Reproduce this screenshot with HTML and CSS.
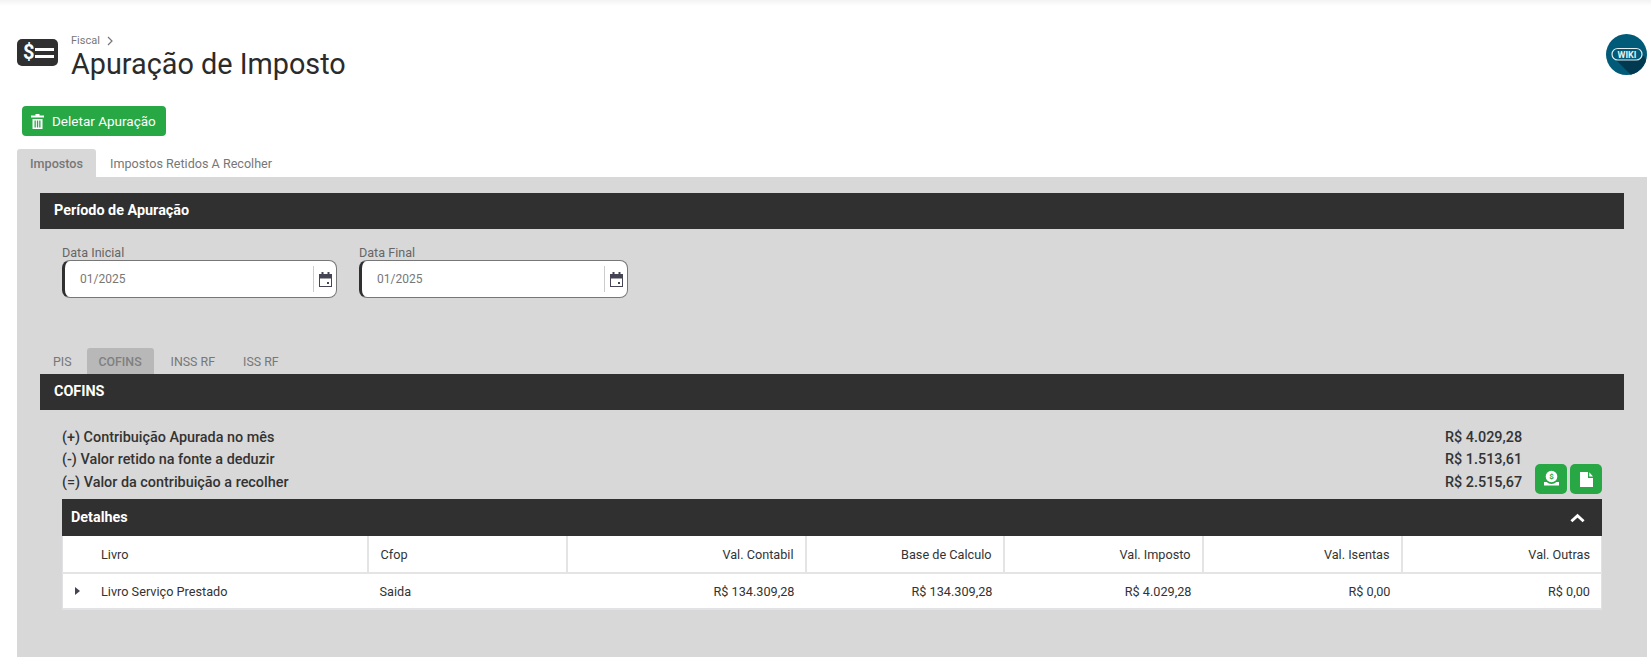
FILE: index.html
```html
<!DOCTYPE html>
<html lang="pt-BR">
<head>
<meta charset="utf-8">
<title>Apuração de Imposto</title>
<link rel="stylesheet" href="styles.css">
</head>
<body>
<div class="topshadow"></div>
<header class="page-head">
  <div class="logo"><span class="logo-s">$</span><span class="logo-lines"><i></i><i></i></span></div>
  <div class="titles">
    <div class="crumb"><span>Fiscal</span>
      <svg class="crumb-arrow" viewBox="0 0 8 10" width="8" height="10"><path d="M2 1l4 4-4 4" fill="none" stroke="#777" stroke-width="1.2"/></svg>
    </div>
    <h1>Apuração de Imposto</h1>
  </div>
  <div class="wiki">
    <svg viewBox="0 0 41 41" width="41" height="41">
      <defs><clipPath id="wc"><circle cx="20.5" cy="20.5" r="20.5"/></clipPath></defs>
      <circle cx="20.5" cy="20.5" r="20.5" fill="#005a78"/>
      <path d="M10 26 L38 22 L41 28 L41 41 L25 41Z" fill="#013a50" clip-path="url(#wc)"/>
      <rect x="6" y="14.500" width="30" height="11.500" rx="5.700" fill="#005a78" stroke="#e4edf0" stroke-width="1.200"/>
      <text x="21" y="23.500" text-anchor="middle" class="wiki-text">WIKI</text>
    </svg>
  </div>
</header>
<div class="actions">
  <button class="btn-del">
    <svg viewBox="0 0 13 15" width="13" height="15"><path fill="#fff" fill-rule="evenodd" d="M4.500 0h4v1.500H13V3.500H0V1.500H4.500zM1.500 5h10v10h-10zM3.500 6.500v7h1.300v-7zM5.900 6.500v7h1.300v-7zM8.200 6.500v7h1.300v-7z"/></svg>
    <span>Deletar Apuração</span>
  </button>
</div>
<nav class="tabs main-tabs">
  <a class="tab active">Impostos</a>
  <a class="tab">Impostos Retidos A Recolher</a>
</nav>
<main class="panel">
  <section class="bar">Período de Apuração</section>
  <div class="dates">
    <div class="field f1">
      <label>Data Inicial</label>
      <div class="input"><span class="val">01/2025</span><span class="cal">
        <svg viewBox="0 0 13 15" width="13" height="15"><path fill="#445" fill-rule="evenodd" d="M2.500 0h2v2h4V0h2v2H13v13H0V2h2.500zM1 6.500V14h11V6.500zM8 10h2v2H8z"/></svg></span></div>
    </div>
    <div class="field f2">
      <label>Data Final</label>
      <div class="input"><span class="val">01/2025</span><span class="cal">
        <svg viewBox="0 0 13 15" width="13" height="15"><path fill="#445" fill-rule="evenodd" d="M2.500 0h2v2h4V0h2v2H13v13H0V2h2.500zM1 6.500V14h11V6.500zM8 10h2v2H8z"/></svg></span></div>
    </div>
  </div>
  <nav class="tabs sub-tabs">
    <a class="stab pis">PIS</a>
    <a class="stab active">COFINS</a>
    <a class="stab">INSS RF</a>
    <a class="stab">ISS RF</a>
  </nav>
  <section class="bar">COFINS</section>
  <div class="inner">
    <div class="summary">
      <div class="lines">
        <div class="line"><span>(+) Contribuição Apurada no mês</span><span class="amt">R$ 4.029,28</span></div>
        <div class="line"><span>(-) Valor retido na fonte a deduzir</span><span class="amt">R$ 1.513,61</span></div>
        <div class="line"><span>(=) Valor da contribuição a recolher</span><span class="amt">R$ 2.515,67</span></div>
      </div>
      <div class="icon-btns">
        <button class="btn-ico"><svg viewBox="0 0 20 20" width="20" height="20"><circle cx="10.500" cy="7.500" r="5.800" fill="#fff"/><path fill="#fff" d="M3 13h2.600a7 7 0 0 0 9.800 0H18v3.500H3z"/><text x="10.500" y="10.300" text-anchor="middle" class="ico-s">$</text></svg></button>
        <button class="btn-ico"><svg viewBox="0 0 13 15" width="13" height="15"><path fill="#fff" d="M0 0h8v6h5v9H0zM9.300 0.300L13 4.500H9.300z"/></svg></button>
      </div>
    </div>
    <div class="details-head">
      <span>Detalhes</span>
      <svg viewBox="0 0 16 10" width="15" height="10"><path d="M1.500 8.500L8 2.500l6.500 6" fill="none" stroke="#fff" stroke-width="3"/></svg>
    </div>
    <table class="grid">
      <colgroup>
        <col class="c1"><col class="c2"><col class="c3"><col class="c4"><col class="c5"><col class="c6"><col class="c7">
      </colgroup>
      <thead>
        <tr><th class="l first">Livro</th><th class="l">Cfop</th><th>Val. Contabil</th><th>Base de Calculo</th><th>Val. Imposto</th><th>Val. Isentas</th><th>Val. Outras</th></tr>
      </thead>
      <tbody>
        <tr>
          <td class="l first"><span class="caret"></span>Livro Serviço Prestado</td>
          <td class="l">Saida</td><td>R$ 134.309,28</td><td>R$ 134.309,28</td><td>R$ 4.029,28</td><td>R$ 0,00</td><td>R$ 0,00</td>
        </tr>
      </tbody>
    </table>
  </div>
</main>
</body>
</html>
```
FILE: styles.css
```css
* { box-sizing: border-box; }
html, body { margin: 0; padding: 0; background: #fff; }
body { font-family: Roboto, "Liberation Sans", sans-serif; color: #333; height: 666px; overflow: hidden; padding-left: 17px; padding-right: 4px; position: relative; }
.topshadow { position: absolute; left: 0; right: 0; top: 0; height: 6px; background: linear-gradient(#f3f3f3, #fff); }

.page-head { display: flex; align-items: flex-start; padding-top: 34px; height: 106px; }
.logo { width: 41px; height: 27px; margin-top: 5px; background: #303030; border-radius: 5px; display: flex; align-items: center; padding-left: 6px; }
.logo-s { color: #fff; font-weight: 700; font-size: 20px; line-height: 27px; width: 12px; }
.logo-lines { display: flex; flex-direction: column; gap: 4px; }
.logo-lines i { display: block; width: 19px; height: 3px; background: #fff; }
.titles { margin-left: 13px; }
.crumb { font-size: 11px; color: #777; line-height: 13px; display: flex; align-items: center; gap: 6px; }
h1 { margin: 0; font-size: 28.800px; font-weight: 400; line-height: 34px; color: #2b2b2b; }
.wiki { margin-left: auto; width: 41px; height: 41px; }
.wiki-text { font: 700 9px Roboto, sans-serif; fill: #e8eff2; }

.actions { margin-left: 5px; height: 43px; }
.btn-del { height: 30px; width: 144px; background: #28a745; color: #fff; border: 0; border-radius: 4px; font: 400 13.500px Roboto, sans-serif; display: flex; align-items: center; padding: 0 0 0 9px; gap: 8px; }

.main-tabs { display: flex; height: 28px; align-items: stretch; }
.tab { font-size: 12.600px; color: #777; padding: 0 14px; display: flex; align-items: center; padding-top: 1px; }
.tab.active { background: #d8d8d8; border-radius: 3px 3px 0 0; font-weight: 500; width: 79px; justify-content: center; padding-left: 0; padding-right: 0; }

.panel { background: #d8d8d8; height: 480px; padding: 16px 0 0 23px; }
.bar { background: #303030; color: #fff; font-weight: 700; font-size: 14.400px; height: 36px; line-height: 35px; padding-left: 14px; margin-right: 23px; }

.dates { display: flex; height: 119px; padding: 17px 0 0 22px; gap: 22px; }
.field label { display: block; font-size: 12.600px; color: #666; line-height: 14px; }
.f1 { width: 275px; }
.f2 { width: 269px; }
.input { height: 38px; background: #fff; border: 1px solid #777; border-left: 3px solid #303030; border-radius: 8px; display: flex; align-items: center; justify-content: space-between; font-size: 12px; color: #777; padding-left: 15px; }
.cal { width: 23px; height: 26px; border-left: 1px solid #ccc; display: flex; align-items: center; justify-content: center; }

.sub-tabs { display: flex; height: 26px; align-items: stretch; }
.stab { font-size: 12.400px; color: #777; padding: 4px 14px 0; line-height: 20px; }
.stab.pis { padding: 4px 15px 0 13px; }
.stab.active { background: #b8b8b8; border-radius: 3px 3px 0 0; width: 67px; padding: 4px 0 0; text-align: center; font-weight: 500; color: #808080; margin-right: 3px; }

.inner { padding: 0 45px 0 22px; }
.summary { display: flex; align-items: flex-end; height: 89px; }
.lines { flex: 1; padding-bottom: 5px; }
.line { display: flex; justify-content: space-between; font-size: 14.400px; font-weight: 500; line-height: 22.500px; color: #333; }
.amt { width: 90px; white-space: nowrap; }
.icon-btns { display: flex; gap: 3px; margin-bottom: 5px; }
.btn-ico { width: 32px; height: 30px; background: #28a745; border: 0; border-radius: 5px; padding: 0; display: flex; align-items: center; justify-content: center; }
.ico-s { font: 700 8px Roboto, sans-serif; fill: #28a745; }

.details-head { background: #303030; color: #fff; font-weight: 700; font-size: 14.400px; height: 37px; display: flex; align-items: center; justify-content: space-between; padding: 0 17px 0 9px; }

.grid { width: 100%; table-layout: fixed; border-collapse: collapse; background: #fff; font-size: 12.700px; border: 1px solid #e2e2e6; border-top: 0; border-bottom-width: 2px; }
.c1 { width: 305px; } .c2 { width: 199px; } .c3 { width: 239px; } .c4 { width: 198px; } .c5 { width: 199px; } .c6 { width: 199px; }
.grid th { font-weight: 400; height: 37px; text-align: right; padding: 0 11px; border-right: 2px solid #e4e4e4; border-bottom: 2px solid #e4e4e4; }
.grid th:last-child { border-right: 0; }
.grid td { height: 36px; text-align: right; padding: 0 11px; }
.grid .l { text-align: left; padding-left: 12px; }
.grid .first { padding-left: 38px; position: relative; }
.caret { position: absolute; left: 12px; top: 50%; margin-top: -4px; border-left: 5px solid #445; border-top: 4px solid transparent; border-bottom: 4px solid transparent; }
```
